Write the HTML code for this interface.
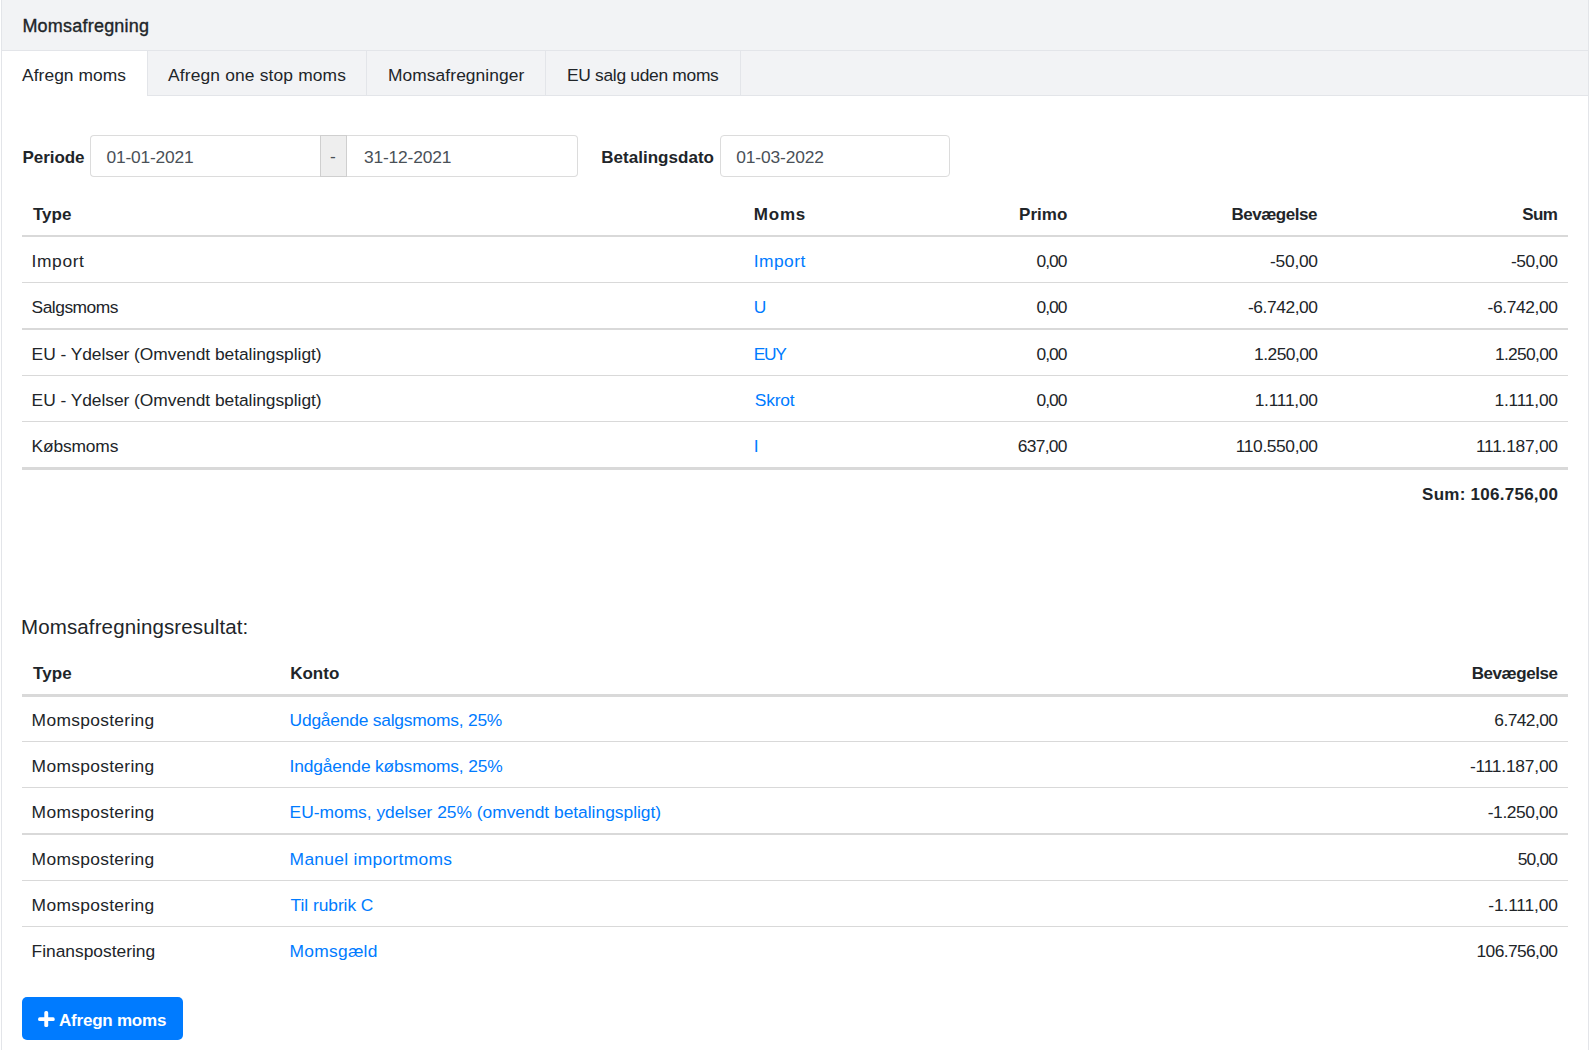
<!DOCTYPE html>
<html><head><meta charset="utf-8"><title>Momsafregning</title>
<style>
html,body{margin:0;padding:0;background:#fff;}
body{width:1593px;height:1050px;position:relative;overflow:hidden;font-family:"Liberation Sans",sans-serif;color:#212529;}
.r{position:absolute;box-sizing:content-box;}
.t{position:absolute;line-height:20px;white-space:pre;}
</style></head><body>
<div class="r" style="left:1px;top:0px;width:1px;height:1050px;background:#e3e5e9;"></div>
<div class="r" style="left:1588px;top:0px;width:1px;height:1050px;background:#e3e5e9;"></div>
<div class="r" style="left:2px;top:0px;width:1586px;height:50px;background:#f2f3f5;"></div>
<div class="r" style="left:2px;top:50px;width:1586px;height:1px;background:#e3e5e9;"></div>
<div class="r" style="left:148px;top:51px;width:1440px;height:44px;background:#f2f3f5;"></div>
<div class="r" style="left:148px;top:95px;width:1440px;height:1px;background:#e3e5e9;"></div>
<div class="r" style="left:147px;top:51px;width:1px;height:45px;background:#e3e5e9;"></div>
<div class="r" style="left:366px;top:51px;width:1px;height:45px;background:#e3e5e9;"></div>
<div class="r" style="left:545px;top:51px;width:1px;height:45px;background:#e3e5e9;"></div>
<div class="r" style="left:740px;top:51px;width:1px;height:45px;background:#e3e5e9;"></div>
<div class="r" style="left:90px;top:135px;width:229px;height:40px;border:1px solid #dcdcdc;border-right:0;border-radius:4px 0 0 4px;background:#fff"></div>
<div class="r" style="left:320px;top:135px;width:25px;height:40px;border:1px solid #cfcfcf;background:#eeeeee"></div>
<div class="r" style="left:347px;top:135px;width:230px;height:40px;border:1px solid #dcdcdc;border-left:0;border-radius:0 4px 4px 0;background:#fff"></div>
<div class="r" style="left:720px;top:135px;width:228px;height:40px;border:1px solid #dcdcdc;border-radius:4px;background:#fff"></div>
<div class="r" style="left:22px;top:235px;width:1546px;height:2px;background:#d9d9d9;"></div>
<div class="r" style="left:22px;top:282px;width:1546px;height:1px;background:#d9d9d9;"></div>
<div class="r" style="left:22px;top:328px;width:1546px;height:2px;background:#d9d9d9;"></div>
<div class="r" style="left:22px;top:375px;width:1546px;height:1px;background:#d9d9d9;"></div>
<div class="r" style="left:22px;top:421px;width:1546px;height:1px;background:#d9d9d9;"></div>
<div class="r" style="left:22px;top:467px;width:1546px;height:3px;background:#d9d9d9;"></div>
<div class="r" style="left:22px;top:694px;width:1546px;height:3px;background:#d9d9d9;"></div>
<div class="r" style="left:22px;top:741px;width:1546px;height:1px;background:#d9d9d9;"></div>
<div class="r" style="left:22px;top:787px;width:1546px;height:1px;background:#d9d9d9;"></div>
<div class="r" style="left:22px;top:833px;width:1546px;height:2px;background:#d9d9d9;"></div>
<div class="r" style="left:22px;top:880px;width:1546px;height:1px;background:#d9d9d9;"></div>
<div class="r" style="left:22px;top:926px;width:1546px;height:1px;background:#d9d9d9;"></div>
<div class="r" style="left:22px;top:997px;width:161px;height:43px;background:#007bff;border-radius:5px"></div>
<svg class="r" style="left:38px;top:1011px" width="17" height="16" viewBox="0 0 17 16"><rect x="6.3" y="0.1" width="3.9" height="15.9" rx="1.6" fill="#fff"/><rect x="0.1" y="6.3" width="16.6" height="3.7" rx="1.6" fill="#fff"/></svg>
<div class="t" style="top:16px;font-size:18.0px;letter-spacing:0.217px;left:22.40px;-webkit-text-stroke:0.35px #212529;">Momsafregning</div>
<div class="t" style="top:65px;font-size:17.4px;letter-spacing:0.060px;left:22.00px;">Afregn moms</div>
<div class="t" style="top:65px;font-size:17.4px;letter-spacing:0.158px;left:168.00px;">Afregn one stop moms</div>
<div class="t" style="top:65px;font-size:17.4px;letter-spacing:0.071px;left:388.00px;">Momsafregninger</div>
<div class="t" style="top:65px;font-size:17.4px;letter-spacing:-0.300px;left:567.00px;">EU salg uden moms</div>
<div class="t" style="top:148px;font-size:17.0px;font-weight:700;letter-spacing:-0.067px;left:22.60px;">Periode</div>
<div class="t" style="top:148px;font-size:17.0px;font-weight:700;letter-spacing:0.033px;left:601.20px;">Betalingsdato</div>
<div class="t" style="top:146px;font-size:17.4px;color:#495057;left:330.00px;">-</div>
<div class="t" style="top:147px;font-size:17.4px;color:#495057;letter-spacing:-0.222px;left:106.60px;">01-01-2021</div>
<div class="t" style="top:147px;font-size:17.4px;color:#495057;letter-spacing:-0.178px;left:364.00px;">31-12-2021</div>
<div class="t" style="top:147px;font-size:17.4px;color:#495057;letter-spacing:-0.133px;left:736.20px;">01-03-2022</div>
<div class="t" style="top:205px;font-size:17.0px;font-weight:700;left:33.00px;">Type</div>
<div class="t" style="top:205px;font-size:17.0px;font-weight:700;letter-spacing:0.800px;left:753.80px;">Moms</div>
<div class="t" style="top:205px;font-size:17.0px;font-weight:700;letter-spacing:0.050px;right:525.55px;">Primo</div>
<div class="t" style="top:205px;font-size:17.0px;font-weight:700;letter-spacing:-0.475px;right:276.07px;">Bevægelse</div>
<div class="t" style="top:205px;font-size:17.0px;font-weight:700;letter-spacing:-0.700px;right:35.90px;">Sum</div>
<div class="t" style="top:251px;font-size:17.4px;letter-spacing:0.600px;left:31.60px;">Import</div>
<a class="t" style="top:251px;font-size:17.4px;color:#007bff;letter-spacing:0.440px;left:753.80px;">Import</a>
<div class="t" style="top:251px;font-size:17.4px;letter-spacing:-1.000px;right:526.60px;">0,00</div>
<div class="t" style="top:251px;font-size:17.4px;letter-spacing:-0.280px;right:275.28px;">-50,00</div>
<div class="t" style="top:251px;font-size:17.4px;letter-spacing:-0.440px;right:35.44px;">-50,00</div>
<div class="t" style="top:297px;font-size:17.4px;letter-spacing:-0.500px;left:31.60px;">Salgsmoms</div>
<a class="t" style="top:297px;font-size:17.4px;color:#007bff;left:753.80px;">U</a>
<div class="t" style="top:297px;font-size:17.4px;letter-spacing:-1.000px;right:526.60px;">0,00</div>
<div class="t" style="top:297px;font-size:17.4px;letter-spacing:-0.425px;right:275.43px;">-6.742,00</div>
<div class="t" style="top:297px;font-size:17.4px;letter-spacing:-0.375px;right:35.38px;">-6.742,00</div>
<div class="t" style="top:344px;font-size:17.4px;letter-spacing:-0.044px;left:31.60px;">EU - Ydelser (Omvendt betalingspligt)</div>
<a class="t" style="top:344px;font-size:17.4px;color:#007bff;letter-spacing:-1.300px;left:753.80px;">EUY</a>
<div class="t" style="top:344px;font-size:17.4px;letter-spacing:-1.000px;right:526.60px;">0,00</div>
<div class="t" style="top:344px;font-size:17.4px;letter-spacing:-0.543px;right:275.54px;">1.250,00</div>
<div class="t" style="top:344px;font-size:17.4px;letter-spacing:-0.657px;right:35.66px;">1.250,00</div>
<div class="t" style="top:390px;font-size:17.4px;letter-spacing:-0.044px;left:31.60px;">EU - Ydelser (Omvendt betalingspligt)</div>
<a class="t" style="top:390px;font-size:17.4px;color:#007bff;letter-spacing:-0.200px;left:754.80px;">Skrot</a>
<div class="t" style="top:390px;font-size:17.4px;letter-spacing:-1.000px;right:526.60px;">0,00</div>
<div class="t" style="top:390px;font-size:17.4px;letter-spacing:-0.257px;right:275.26px;">1.111,00</div>
<div class="t" style="top:390px;font-size:17.4px;letter-spacing:-0.229px;right:35.23px;">1.111,00</div>
<div class="t" style="top:436px;font-size:17.4px;letter-spacing:-0.171px;left:31.60px;">Købsmoms</div>
<a class="t" style="top:436px;font-size:17.4px;color:#007bff;left:753.80px;">I</a>
<div class="t" style="top:436px;font-size:17.4px;letter-spacing:-0.720px;right:526.32px;">637,00</div>
<div class="t" style="top:436px;font-size:17.4px;letter-spacing:-0.400px;right:275.40px;">110.550,00</div>
<div class="t" style="top:436px;font-size:17.4px;letter-spacing:-0.267px;right:35.27px;">111.187,00</div>
<div class="t" style="top:485px;font-size:17.0px;font-weight:700;letter-spacing:0.257px;right:34.74px;">Sum: 106.756,00</div>
<div class="t" style="top:617px;font-size:20.5px;letter-spacing:0.127px;left:21.00px;">Momsafregningsresultat:</div>
<div class="t" style="top:664px;font-size:17.0px;font-weight:700;letter-spacing:0.067px;left:33.00px;">Type</div>
<div class="t" style="top:664px;font-size:17.0px;font-weight:700;left:290.20px;">Konto</div>
<div class="t" style="top:664px;font-size:17.0px;font-weight:700;letter-spacing:-0.425px;right:35.43px;">Bevægelse</div>
<div class="t" style="top:710px;font-size:17.4px;letter-spacing:0.317px;left:31.60px;">Momspostering</div>
<a class="t" style="top:710px;font-size:17.4px;color:#007bff;letter-spacing:-0.218px;left:289.60px;">Udgående salgsmoms, 25%</a>
<div class="t" style="top:710px;font-size:17.4px;letter-spacing:-0.571px;right:35.57px;">6.742,00</div>
<div class="t" style="top:756px;font-size:17.4px;letter-spacing:0.317px;left:31.60px;">Momspostering</div>
<a class="t" style="top:756px;font-size:17.4px;color:#007bff;letter-spacing:-0.155px;left:289.60px;">Indgående købsmoms, 25%</a>
<div class="t" style="top:756px;font-size:17.4px;letter-spacing:-0.220px;right:35.22px;">-111.187,00</div>
<div class="t" style="top:802px;font-size:17.4px;letter-spacing:0.317px;left:31.60px;">Momspostering</div>
<a class="t" style="top:802px;font-size:17.4px;color:#007bff;letter-spacing:-0.014px;left:289.60px;">EU-moms, ydelser 25% (omvendt betalingspligt)</a>
<div class="t" style="top:802px;font-size:17.4px;letter-spacing:-0.400px;right:35.40px;">-1.250,00</div>
<div class="t" style="top:849px;font-size:17.4px;letter-spacing:0.317px;left:31.60px;">Momspostering</div>
<a class="t" style="top:849px;font-size:17.4px;color:#007bff;letter-spacing:0.300px;left:289.60px;">Manuel importmoms</a>
<div class="t" style="top:849px;font-size:17.4px;letter-spacing:-0.800px;right:35.80px;">50,00</div>
<div class="t" style="top:895px;font-size:17.4px;letter-spacing:0.317px;left:31.60px;">Momspostering</div>
<a class="t" style="top:895px;font-size:17.4px;color:#007bff;letter-spacing:-0.055px;left:290.60px;">Til rubrik C</a>
<div class="t" style="top:895px;font-size:17.4px;letter-spacing:-0.150px;right:35.15px;">-1.111,00</div>
<div class="t" style="top:941px;font-size:17.4px;letter-spacing:-0.014px;left:31.60px;">Finanspostering</div>
<a class="t" style="top:941px;font-size:17.4px;color:#007bff;letter-spacing:0.257px;left:289.60px;">Momsgæld</a>
<div class="t" style="top:941px;font-size:17.4px;letter-spacing:-0.622px;right:35.62px;">106.756,00</div>
<div class="t" style="top:1011px;font-size:17.0px;font-weight:700;color:#ffffff;letter-spacing:-0.220px;left:59.00px;">Afregn moms</div>
</body></html>
